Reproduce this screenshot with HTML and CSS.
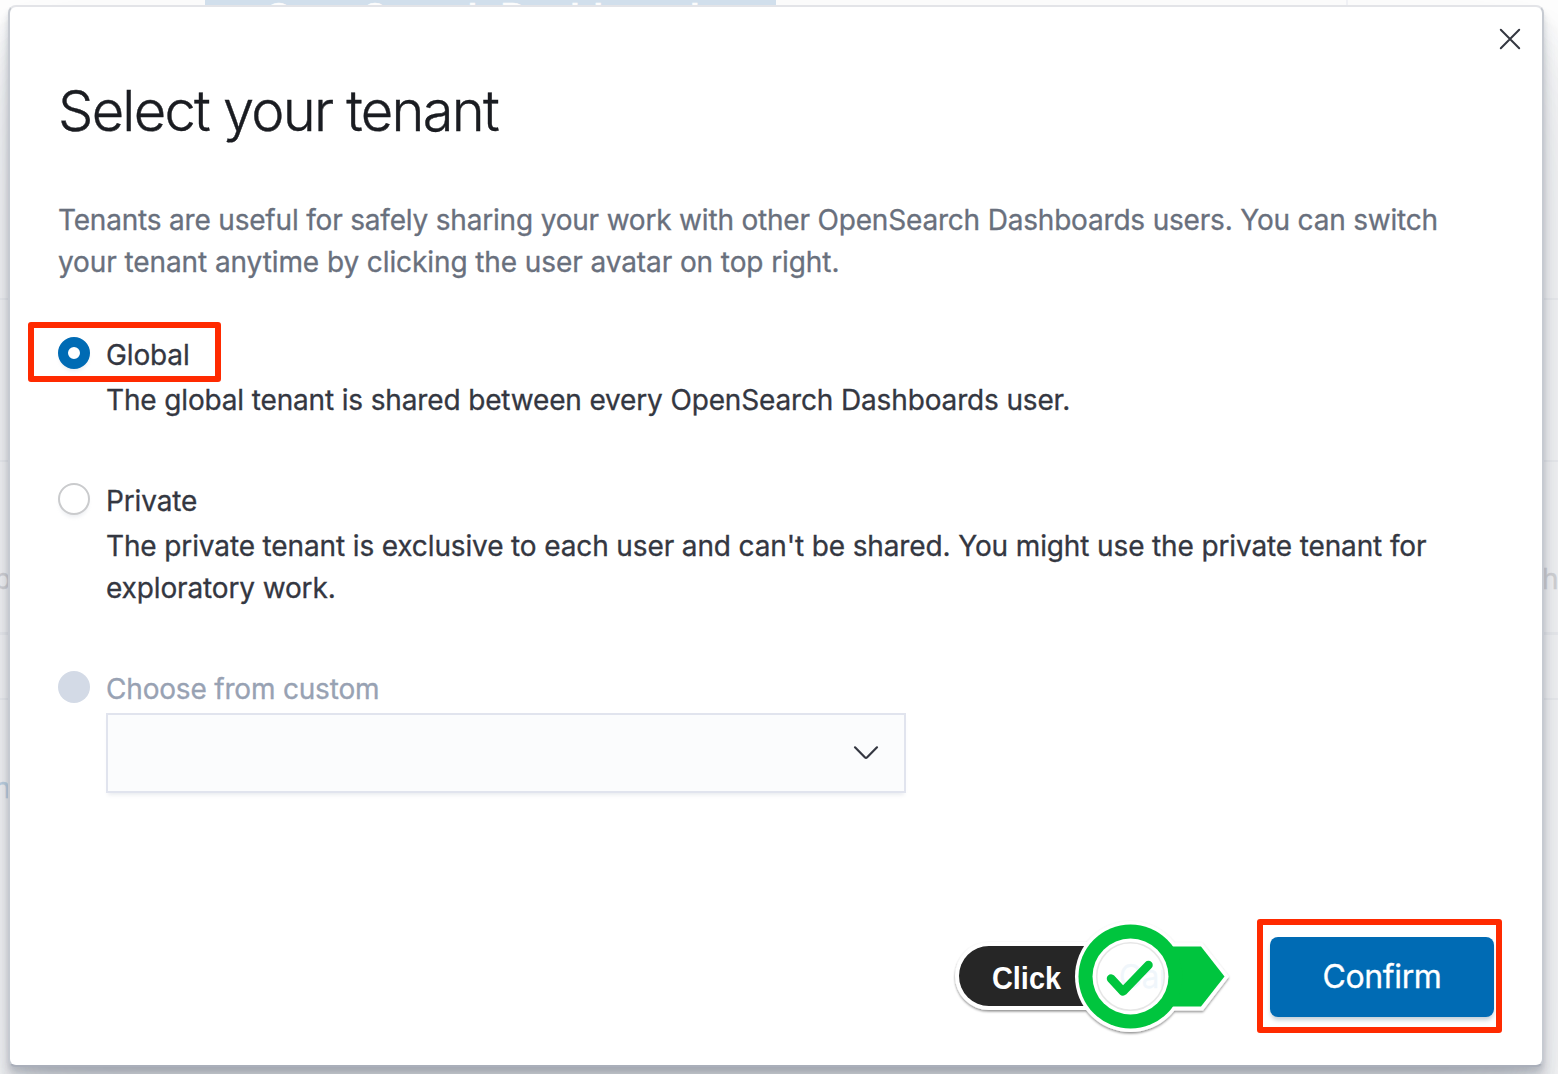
FILE: index.html
```html
<!DOCTYPE html>
<html lang="en">
<head>
<meta charset="utf-8">
<title>Select your tenant</title>
<link rel="stylesheet" href="styles.css">
</head>
<body>
<div class="page" aria-hidden="true">
  <div class="page-banner">OpenSearch Dashboards</div>
  <i class="page-divider"></i>
  <i class="page-rule rule-a"></i>
  <i class="page-rule rule-b"></i>
  <i class="page-rule rule-c"></i>
  <i class="page-rule rule-d"></i>
  <span class="page-text text-left">p</span>
  <span class="page-text text-link">n</span>
  <span class="page-text text-right">h</span>
</div>

<main class="modal" role="dialog" aria-labelledby="title">
  <button class="close" aria-label="Close">
    <svg width="22" height="22" viewBox="0 0 22 22"><path d="M1.800 1.800 20.200 20.200M20.200 1.800 1.800 20.200"/></svg>
  </button>
  <h1 class="title" id="title">Select your tenant</h1>
  <p class="intro"><span class="tight">Tenants are useful for safely sharing your work with other OpenSearch Dashboards users. You can switch</span><br><span class="loose">your tenant anytime by clicking the user avatar on top right.</span></p>

  <section class="option">
    <span class="radio radio-checked"></span>
    <div class="option-body">
      <div class="option-label label-global">Global<span class="mark mark-global"></span></div>
      <p class="option-text text-global">The global tenant is shared between every OpenSearch Dashboards user.</p>
    </div>
  </section>

  <section class="option">
    <span class="radio"></span>
    <div class="option-body">
      <div class="option-label">Private</div>
      <p class="option-text text-private">The private tenant is exclusive to each user and can't be shared. You might use the private tenant for<br>exploratory work.</p>
    </div>
  </section>

  <section class="option option-disabled">
    <span class="radio radio-disabled"></span>
    <div class="option-body">
      <div class="option-label">Choose from custom</div>
      <div class="combo">
        <svg width="26" height="16" viewBox="0 0 26 16"><path d="M2 2.300 11.800 12.200Q13 13.400 14.200 12.200L24 2.300"/></svg>
      </div>
    </div>
  </section>

  <footer class="footer">
    <button class="cancel">Cancel</button>
    <button class="confirm">Confirm<span class="mark mark-confirm"></span></button>
  </footer>
</main>

<div class="callout">
  <svg width="300" height="130" viewBox="945 910 300 130">
    <defs>
      <filter id="drop" x="-10%" y="-10%" width="120%" height="130%">
        <feDropShadow dx="0" dy="1.5" stdDeviation="1" flood-color="#000" flood-opacity=".45"/>
      </filter>
      <mask id="hole" maskUnits="userSpaceOnUse" x="940" y="900" width="310" height="150">
        <rect x="940" y="900" width="310" height="150" fill="#fff"/>
        <circle cx="1130.500" cy="976.500" r="34" fill="#000"/>
      </mask>
    </defs>
    <circle cx="1130.500" cy="976.500" r="34" class="lens"/>
    <g mask="url(#hole)">
      <g filter="url(#drop)">
        <path class="white" d="M989 942H1100V1010H989A34 34 0 0 1 989 942Z"/>
        <path class="white" d="M1150 942.500H1202L1229 976.500L1203 1010.500H1150Z"/>
        <path class="dark" d="M989 946H1100V1006H989A30 30 0 0 1 989 946Z"/>
        <circle class="white" cx="1130.500" cy="976.500" r="55.500"/>
      </g>
      <path class="green" d="M1150 946.500H1201L1224.500 976.500L1201 1006.500H1150Z"/>
      <circle class="green" cx="1130.500" cy="976.500" r="52"/>
      <circle class="white" cx="1130.500" cy="976.500" r="38"/>
    </g>
    <circle class="lens-edge" cx="1130.500" cy="976.500" r="33.800"/>
    <path class="tick" d="M1111 978.500 1123 991.500 1148.500 965"/>
    <text class="click" x="992" y="989" textLength="69" lengthAdjust="spacingAndGlyphs">Click</text>
  </svg>
</div>
</body>
</html>
```

FILE: styles.css
```css
* { box-sizing: border-box; }
html, body { height: 100%; }
body {
  margin: 0;
  overflow: hidden;
  background: #fefefe;
  color: #343741;
  font: 400 28px/42px Inter, sans-serif;
  letter-spacing: -0.14px;
  -webkit-text-stroke: 0.3px currentColor;
}
h1, p { margin: 0; }
button { font: inherit; letter-spacing: inherit; border: 0; background: none; padding: 0; }

.page { position: absolute; inset: 0; overflow: hidden; }
.page-banner {
  position: absolute; left: 205px; top: 0; width: 571px; height: 36px;
  padding-left: 59px; background: #d4e2ef; color: #fff;
  font-size: 38px; font-weight: 600; line-height: 34px; letter-spacing: -0.1px; white-space: nowrap;
}
.page-divider { position: absolute; left: 1346px; top: 0; width: 2px; height: 20px; background: #f3f4f8; }
.page-rule { position: absolute; left: 0; right: 0; height: 2px; background: #f5f6f8; }
.rule-a { top: 298px; }
.rule-b { top: 460px; }
.rule-c { top: 632px; height: 3px; }
.rule-d { top: 698px; }
.page-text { position: absolute; color: #dcdcde; }
.text-left { left: -6px; top: 558px; }
.text-link { left: -6px; top: 767px; color: #c8dcec; }
.text-right { left: 1542px; top: 558px; }

.modal {
  position: relative;
  width: 1536px;
  height: 1062px;
  margin: 5px 0 0 8px;
  padding: 68px 48px 0;
  background: #fff;
  border: 2px solid #c6cad1;
  border-top-color: #e3e4e8;
  border-bottom-color: #aaafba;
  border-radius: 8px;
  box-shadow:
    0 80px 128px rgba(65, 78, 101, .1),
    0 48px 64px rgba(65, 78, 101, .1),
    0 32px 32px rgba(65, 78, 101, .1),
    0 16px 16px rgba(65, 78, 101, .1),
    0 8px 8px rgba(65, 78, 101, .1),
    0 4px 4px rgba(65, 78, 101, .1);
}
.close { position: absolute; right: 21px; top: 21px; width: 22px; height: 22px; }
.close svg { display: block; fill: none; stroke: #343741; stroke-width: 2; stroke-linecap: round; }

.title {
  color: #1a1c21;
  font-size: 56px;
  font-weight: 300;
  line-height: 72px;
  letter-spacing: -1.74px;
  -webkit-text-stroke-width: 0.4px;
}
.intro { margin-top: 52px; color: #69707d; white-space: nowrap; }
.tight { letter-spacing: -0.19px; }
.loose { letter-spacing: -0.09px; }

.option { display: flex; gap: 16px; margin-top: 52px; }
.option + .option { margin-top: 60px; }
.option-body { flex: 1; white-space: nowrap; }
.option-label { position: relative; line-height: 40px; }
.option-text { margin-top: 4px; }
.text-global { letter-spacing: -0.15px; }
.text-private { letter-spacing: -0.13px; }
.radio {
  width: 32px; height: 32px; margin-top: 2px;
  border: 2px solid #cacbcd; border-radius: 50%; background: #fff;
  box-shadow: 0 4px 4px -2px rgba(152, 162, 179, .2);
}
.radio-checked { border: 10px solid #006bb4; }
.radio-disabled { border: 0; background: #d3dae6; box-shadow: none; }
.option-disabled .option-label { color: #98a2b3; letter-spacing: -0.19px; }
.combo {
  display: flex; align-items: center; justify-content: flex-end;
  width: 800px; height: 80px; margin-top: 4px; padding-right: 25px;
  background: #fbfcfd; border: 2px solid #e1e4ee;
  box-shadow: 0 4px 4px -2px rgba(152, 162, 179, .2);
}
.combo svg { fill: none; stroke: #343741; stroke-width: 2.2; stroke-linecap: round; }

.footer { display: flex; justify-content: flex-end; align-items: center; margin-top: 144px; }
.cancel { margin-right: 51px; color: #006bb4; font-size: 32px; letter-spacing: -0.8px; }
.confirm {
  position: relative; width: 224px; height: 80px; border-radius: 8px;
  background: #006bb4; color: #fff; font-size: 32px; letter-spacing: -0.4px;
  box-shadow: 0 4px 4px -1px rgba(54, 97, 126, .3);
}
.mark { position: absolute; border: 6px solid #ff2a00; border-radius: 3px; }
.mark-global { left: -78px; top: -13.500px; width: 193px; height: 60px; }
.mark-confirm { left: -13px; top: -18px; width: 245px; height: 114px; }

.callout { position: absolute; left: 945px; top: 910px; -webkit-text-stroke-width: 0; }
.callout svg { display: block; }
.white { fill: #fff; }
.dark { fill: #252525; }
.green { fill: #00c53e; }
.lens { fill: #fff; fill-opacity: .94; }
.lens-edge { fill: none; stroke: #e6e6e6; stroke-width: 1.5; }
.tick { fill: none; stroke: #00c53e; stroke-width: 8.500; stroke-linecap: round; stroke-linejoin: round; }
.click { fill: #fff; font: 700 31px "Liberation Sans", Arial, sans-serif; letter-spacing: 0; }
```
